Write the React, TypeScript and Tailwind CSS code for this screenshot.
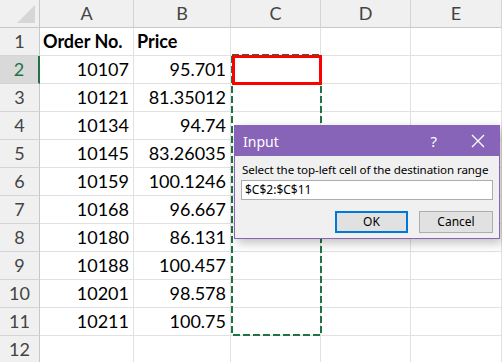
import React from "react";

const cols = ["A", "B", "C", "D", "E"];

const rows: [string, string][] = [
    ["10107", "95.701"],
    ["10121", "81.35012"],
    ["10134", "94.74"],
    ["10145", "83.26035"],
    ["10159", "100.1246"],
    ["10168", "96.667"],
    ["10180", "86.131"],
    ["10188", "100.457"],
    ["10201", "98.578"],
    ["10211", "100.75"],
];

function Cell({ children, align = "right", bold = false }: { children?: React.ReactNode; align?: "left" | "right"; bold?: boolean }) {
    return (
        <div
            className={`h-[28px] border-r border-b border-[#e1e1e1] flex items-center text-[18px] text-black ${align === "right" ? "justify-end pr-[4px]" : "justify-start pl-[3px]"} ${bold ? "font-bold" : ""}`}
        >
            {children}
        </div>
    );
}

function RowHead({ n }: { n: number }) {
    const active = n === 2;
    return (
        <div
            className={`h-[28px] border-b border-[#d4d4d4] flex items-center justify-center text-[18px] ${active ? "bg-[#d9d9d9] text-[#217346] border-r-2 border-r-[#217346]" : "bg-[#f0f0f0] text-[#444] border-r border-r-[#c8c8c8]"}`}
        >
            {n}
        </div>
    );
}

export default function App() {
    return (
        <div className="relative w-[502px] h-[362px] overflow-hidden bg-white" style={{ fontFamily: "Lato, 'Noto Sans', sans-serif" }}>
            <div className="grid grid-cols-[40px_94px_97px_90px_90px_91px]">
                {/* corner */}
                <div className="h-[28px] bg-[#f0f0f0] border-r border-b border-[#c8c8c8] relative">
                    <svg className="absolute inset-0" width="40" height="28">
                        <polygon points="35,5 17,23 35,23" fill="#d6d6d6" />
                    </svg>
                </div>
                {cols.map((c) => (
                    <div key={c} className="h-[28px] bg-[#f0f0f0] border-r border-r-[#d4d4d4] border-b border-b-[#c8c8c8] flex items-center justify-center text-[18px] text-[#444]">
                        {c}
                    </div>
                ))}

                <RowHead n={1} />
                <Cell align="left" bold>Order No.</Cell>
                <Cell align="left" bold>Price</Cell>
                <Cell />
                <Cell />
                <Cell />

                {rows.map(([a, b], i) => (
                    <React.Fragment key={a}>
                        <RowHead n={i + 2} />
                        <Cell>{a}</Cell>
                        <Cell>{b}</Cell>
                        <Cell />
                        <Cell />
                        <Cell />
                    </React.Fragment>
                ))}

                <RowHead n={12} />
                <Cell />
                <Cell />
                <Cell />
                <Cell />
                <Cell />
            </div>

            {/* copy marquee */}
            <svg className="absolute left-[230px] top-[53px]" width="94" height="285">
                <rect x="2" y="2" width="89" height="280" fill="none" stroke="#217346" strokeWidth="2" strokeDasharray="7 3" />
            </svg>

            {/* red highlight */}
            <div className="absolute left-[232px] top-[55px] w-[90px] h-[30px] border-[3px] border-[#ff0000]" />

            {/* Input dialog */}
            <div
                className="absolute left-[234px] top-[125px] w-[266px] h-[114px] bg-[#f0f0f0] border border-[#8764b8] shadow-[3px_4px_10px_rgba(0,0,0,0.25)] flex flex-col"
                style={{ fontFamily: "'Noto Sans', sans-serif" }}
            >
                <div className="h-[30px] bg-[#8764b8] text-white flex items-center pl-[8px] pr-[14px] text-[14px]">
                    <span>Input</span>
                    <span className="ml-auto mr-[34px] text-[15px]">?</span>
                    <svg width="14" height="14" viewBox="0 0 14 14">
                        <path d="M1 1L13 13M13 1L1 13" stroke="white" strokeWidth="1.3" />
                    </svg>
                </div>
                <div className="px-[6px] pt-[6px] flex flex-col">
                    <div className="text-[11.6px] tracking-[-0.1px] text-black leading-[16px] whitespace-nowrap pl-[1px]">Select the top-left cell of the destination range</div>
                    <div className="mt-[2px] h-[20px] bg-white border border-[#adadad] flex items-center px-[3px] text-[12px] text-black">
                        $C$2:$C$11
                    </div>
                    <div className="mt-[11px] flex justify-end gap-[11px]">
                        <div className="w-[73px] h-[22px] bg-[#e1e1e1] border-2 border-[#0078d7] flex items-center justify-center text-[12px] text-black">OK</div>
                        <div className="w-[74px] h-[22px] bg-[#e1e1e1] border border-[#adadad] flex items-center justify-center text-[12px] text-black">Cancel</div>
                    </div>
                </div>
            </div>
        </div>
    );
}
